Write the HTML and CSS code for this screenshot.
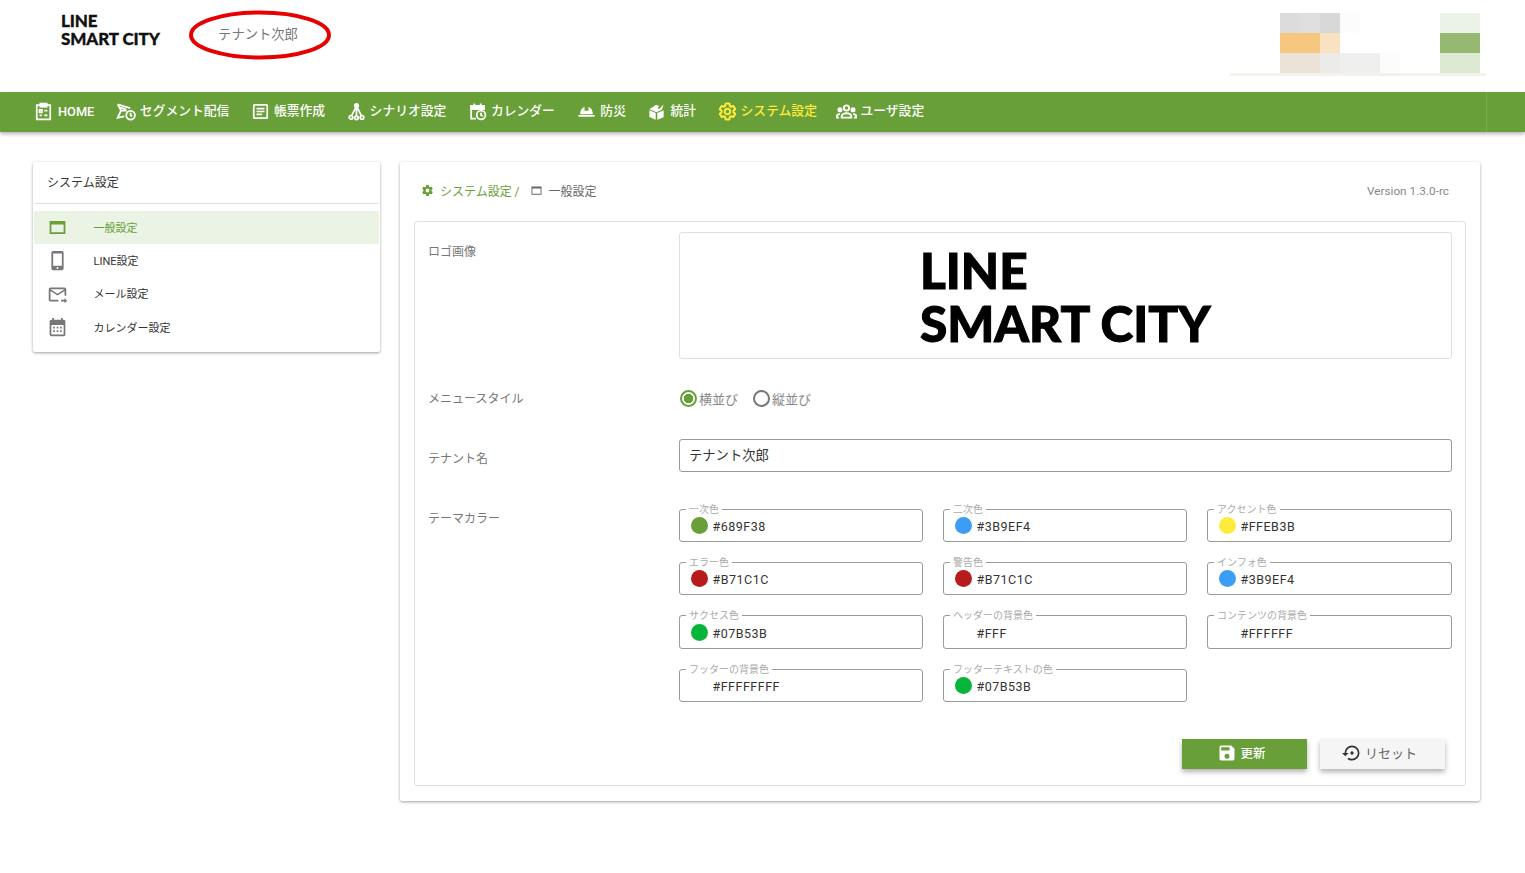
FILE: index.html
```html
<!DOCTYPE html>
<html lang="ja">
<head>
    <meta charset="UTF-8" />
    <meta name="viewport" content="width=device-width, initial-scale=1.0"/>
    <title>システム設定</title>
    <link rel="stylesheet" href="styles.css">
</head>
<body>
    <header class="top">
        <div class="logo"><span>LINE</span><span>SMART CITY</span></div>
        <div class="tenant">
            テナント次郎
            <svg class="ring" viewBox="0 0 142 50"><ellipse cx="71" cy="25" rx="69" ry="22.5" /></svg>
        </div>
        <div class="account">
            <div class="mosaic">
                <i class="c1"></i><i class="c2"></i><i class="c3"></i><i class="c4"></i><i></i><i></i><i></i><i></i><i class="c5"></i><i class="c5"></i>
                <i class="c6"></i><i class="c6"></i><i class="c7"></i><i></i><i></i><i></i><i></i><i></i><i class="c8"></i><i class="c8"></i>
                <i class="c9"></i><i class="c9"></i><i class="c10"></i><i class="c11"></i><i class="c11"></i><i class="c4"></i><i></i><i></i><i class="c12"></i><i class="c12"></i>
            </div>
        </div>
    </header>

    <nav class="menu">
        <a class="menu-item home">
            <svg viewBox="0 0 24 24" class="line"><path d="M8 4H3.500v18h17V4H16"/><rect x="8" y="2" width="8" height="4" fill="#fff"/><path d="M7 10h3v3H7zM7 17h3M13 11h4M13 17h4"/></svg>
            <span>HOME</span>
        </a>
        <a class="menu-item">
            <svg viewBox="0 0 24 24" class="line wide"><path d="M2 4l15 4.500M2 4l4 7.500h7M6 11.500L2 20l8-1.500M4 7.500l8 2.500"/><circle cx="17.500" cy="17" r="5.200"/><path d="M17.500 14v3.200l2 1"/></svg>
            <span>セグメント配信</span>
        </a>
        <a class="menu-item">
            <svg viewBox="0 0 24 24" class="line"><rect x="3.500" y="3.500" width="17" height="17" rx="1"/><path d="M7 8.500h10M7 12h10M7 15.500h7"/></svg>
            <span>帳票作成</span>
        </a>
        <a class="menu-item">
            <svg viewBox="0 0 24 24" class="line"><circle cx="12" cy="4.500" r="2.200" fill="#fff"/><circle cx="5" cy="19.500" r="2.200"/><circle cx="12" cy="20" r="2.200"/><circle cx="19" cy="19.500" r="2.200"/><path d="M11 7l-5 10M13 7l5 10M12 7v11"/></svg>
            <span>シナリオ設定</span>
        </a>
        <a class="menu-item calendar">
            <svg viewBox="0 0 24 24" class="line"><path d="M10 21H4V5h16v5"/><path d="M4 5h16v4H4z" fill="#fff"/><path d="M8 2v4M16 2v4"/><circle cx="16.500" cy="16.500" r="5.500"/><path d="M16.500 13.500v3.200l2 1"/></svg>
            <span>カレンダー</span>
        </a>
        <a class="menu-item">
            <svg viewBox="0 0 24 24" class="fill"><path d="M4 15.500c0-4.500 2-8 5.500-9.500V11h5V6c3.500 1.500 5.500 5 5.500 9.500zM1.500 16.500h21v.5c0 1-.8 1.500-1.500 1.500H3c-.7 0-1.500-.5-1.500-1.500z"/></svg>
            <span>防災</span>
        </a>
        <a class="menu-item">
            <svg viewBox="0 0 24 24" class="fill"><path d="M11.500 3.500l4 1.500-2 2.500 1.500 1.500 6-6-2 6.500L12 13 3 9zM3 10.500l8 3.500v8.500l-8-3.700zM21 10.500v8.800l-8 3.200V14z"/></svg>
            <span>統計</span>
        </a>
        <a class="menu-item active">
            <svg viewBox="0 0 24 24" class="cog-line"><path d="M12,15.5A3.5,3.5 0 0,1 8.5,12A3.5,3.5 0 0,1 12,8.5A3.5,3.5 0 0,1 15.5,12A3.5,3.5 0 0,1 12,15.5M19.43,12.97C19.47,12.65 19.5,12.33 19.5,12C19.5,11.67 19.47,11.34 19.43,11L21.54,9.37C21.73,9.22 21.78,8.95 21.66,8.73L19.66,5.27C19.54,5.05 19.27,4.96 19.05,5.05L16.56,6.05C16.04,5.66 15.5,5.32 14.87,5.07L14.5,2.42C14.46,2.18 14.25,2 14,2H10C9.75,2 9.54,2.18 9.5,2.42L9.13,5.07C8.5,5.32 7.96,5.66 7.44,6.05L4.95,5.05C4.73,4.96 4.46,5.05 4.34,5.27L2.34,8.73C2.21,8.95 2.27,9.22 2.46,9.37L4.57,11C4.53,11.34 4.5,11.67 4.5,12C4.5,12.33 4.53,12.65 4.57,12.97L2.46,14.63C2.27,14.78 2.21,15.05 2.34,15.27L4.34,18.73C4.46,18.95 4.73,19.03 4.95,18.94L7.44,17.94C7.96,18.34 8.5,18.68 9.13,18.93L9.5,21.58C9.54,21.82 9.75,22 10,22H14C14.25,22 14.46,21.82 14.5,21.58L14.87,18.93C15.5,18.67 16.04,18.34 16.56,17.94L19.05,18.95C19.27,19.03 19.54,18.95 19.66,18.73L21.66,15.27C21.78,15.05 21.73,14.78 21.54,14.63L19.43,12.97Z"/></svg>
            <span>システム設定</span>
        </a>
        <a class="menu-item users">
            <svg viewBox="0 0 24 24" class="line"><circle cx="12" cy="8" r="3"/><circle cx="4.500" cy="10" r="1.800" fill="#fff"/><circle cx="19.500" cy="10" r="1.800" fill="#fff"/><path d="M6.500 19v-1.500c0-2 2.500-3.500 5.500-3.500s5.500 1.500 5.500 3.500V19z"/><path d="M3.500 19H1v-1.500c0-1.500 1.500-2.500 3.500-2.500M20.500 19H23v-1.500c0-1.500-1.500-2.500-3.500-2.500"/></svg>
            <span>ユーザ設定</span>
        </a>
        <i class="menu-edge"></i>
    </nav>

    <main class="page">
        <aside class="side card">
            <div class="side-title">システム設定</div>
            <ul class="side-list">
                <li class="side-item selected">
                    <svg viewBox="0 0 24 24"><path d="M3 4.500h18v15H3zM5 8.500V17.500h14V8.500z"/></svg>
                    一般設定
                </li>
                <li class="side-item">
                    <svg viewBox="0 0 24 24"><path d="M17,18H7V4H17M17,1H7C5.89,1 5,1.89 5,3V21A2,2 0 0,0 7,23H17A2,2 0 0,0 19,21V3C19,1.89 18.1,1 17,1M12,19.500a1,1 0 1,1 -.01,0Z"/></svg>
                    LINE設定
                </li>
                <li class="side-item">
                    <svg viewBox="0 0 24 24"><path d="M13 19C13 18.660 13.040 18.330 13.090 18H4V8L12 13L20 8V13.090C20.720 13.210 21.390 13.460 22 13.810V6C22 4.900 21.100 4 20 4H4C2.900 4 2 4.900 2 6V18C2 19.100 2.900 20 4 20H13.090C13.040 19.670 13 19.340 13 19M20 6L12 11L4 6H20M20 22V20H16V18H20V16L23 19L20 22Z"/></svg>
                    メール設定
                </li>
                <li class="side-item">
                    <svg viewBox="0 0 24 24"><path d="M19,20H5V9H19M16,1V3H8V1H6V3H5C3.890,3 3,3.890 3,5V20A2,2 0 0,0 5,22H19A2,2 0 0,0 21,20V5C21,3.890 20.100,3 19,3H18V1M7,11H9V13H7M11,11H13V13H11M15,11H17V13H15M7,15H9V17H7M11,15H13V17H11M15,15H17V17H15Z"/></svg>
                    カレンダー設定
                </li>
            </ul>
        </aside>

        <section class="content card">
            <div class="crumbs">
                <svg class="crumb-cog" viewBox="0 0 24 24"><path d="M12,15.5A3.5,3.5 0 0,1 8.5,12A3.5,3.5 0 0,1 12,8.5A3.5,3.5 0 0,1 15.5,12A3.5,3.5 0 0,1 12,15.5M19.43,12.97C19.47,12.65 19.5,12.33 19.5,12C19.5,11.67 19.47,11.34 19.43,11L21.54,9.37C21.73,9.22 21.78,8.95 21.66,8.73L19.66,5.27C19.54,5.05 19.27,4.96 19.05,5.05L16.56,6.05C16.04,5.66 15.5,5.32 14.87,5.07L14.5,2.42C14.46,2.18 14.25,2 14,2H10C9.75,2 9.54,2.18 9.5,2.42L9.13,5.07C8.5,5.32 7.96,5.66 7.44,6.05L4.95,5.05C4.73,4.96 4.46,5.05 4.34,5.27L2.34,8.73C2.21,8.95 2.27,9.22 2.46,9.37L4.57,11C4.53,11.34 4.5,11.67 4.5,12C4.5,12.33 4.53,12.65 4.57,12.97L2.46,14.63C2.27,14.78 2.21,15.05 2.34,15.27L4.34,18.73C4.46,18.95 4.73,19.03 4.95,18.94L7.44,17.94C7.96,18.34 8.5,18.68 9.13,18.93L9.5,21.58C9.54,21.82 9.75,22 10,22H14C14.25,22 14.46,21.82 14.5,21.58L14.87,18.93C15.5,18.67 16.04,18.34 16.56,17.94L19.05,18.95C19.27,19.03 19.54,18.95 19.66,18.73L21.66,15.27C21.78,15.05 21.73,14.78 21.54,14.63L19.43,12.97Z"/></svg>
                <span class="crumb-link">システム設定 /</span>
                <svg class="crumb-win" viewBox="0 0 24 24"><path d="M1 3h22v18H1zM3 7.500V19h18V7.500z"/></svg>
                <span class="crumb-now">一般設定</span>
                <span class="version">Version 1.3.0-rc</span>
            </div>

            <div class="panel">
                <div class="row row-logo">
                    <div class="row-label">ロゴ画像</div>
                    <div class="logo-box"><div class="logo logo-big"><span>LINE</span><span>SMART CITY</span></div></div>
                </div>
                <div class="row row-radio">
                    <div class="row-label">メニュースタイル</div>
                    <div class="radios">
                        <span class="radio on"></span><span class="radio-text">横並び</span>
                        <span class="radio"></span><span class="radio-text">縦並び</span>
                    </div>
                </div>
                <div class="row row-name">
                    <div class="row-label">テナント名</div>
                    <div class="name-input">テナント次郎</div>
                </div>
                <div class="row row-theme">
                    <div class="row-label">テーマカラー</div>
                    <div class="colors">
                        <div class="field"><label>一次色</label><i class="dot" style="background:#689f38"></i>#689F38</div>
                        <div class="field"><label>二次色</label><i class="dot" style="background:#3b9ef4"></i>#3B9EF4</div>
                        <div class="field"><label>アクセント色</label><i class="dot" style="background:#ffeb3b"></i>#FFEB3B</div>
                        <div class="field"><label>エラー色</label><i class="dot" style="background:#b71c1c"></i>#B71C1C</div>
                        <div class="field"><label>警告色</label><i class="dot" style="background:#b71c1c"></i>#B71C1C</div>
                        <div class="field"><label>インフォ色</label><i class="dot" style="background:#3b9ef4"></i>#3B9EF4</div>
                        <div class="field"><label>サクセス色</label><i class="dot" style="background:#07b53b"></i>#07B53B</div>
                        <div class="field"><label>ヘッダーの背景色</label><i class="dot" style="background:#fff"></i>#FFF</div>
                        <div class="field"><label>コンテンツの背景色</label><i class="dot" style="background:#fff"></i>#FFFFFF</div>
                        <div class="field"><label>フッターの背景色</label><i class="dot" style="background:#fff"></i>#FFFFFFFF</div>
                        <div class="field"><label>フッターテキストの色</label><i class="dot" style="background:#07b53b"></i>#07B53B</div>
                    </div>
                </div>
                <div class="actions">
                    <button class="btn btn-save">
                        <svg viewBox="0 0 24 24"><path d="M15,9H5V5H15M12,19A3,3 0 0,1 9,16A3,3 0 0,1 12,13A3,3 0 0,1 15,16A3,3 0 0,1 12,19M17,3H5C3.890,3 3,3.900 3,5V19A2,2 0 0,0 5,21H19A2,2 0 0,0 21,19V7L17,3Z"/></svg>
                        更新
                    </button>
                    <button class="btn btn-reset">
                        <svg viewBox="0 0 24 24"><path d="M12 3A9 9 0 0 0 3 12H0L4 16L8 12H5A7 7 0 0 1 12 5A7 7 0 0 1 19 12A7 7 0 0 1 12 19C10.500 19 9.090 18.500 7.940 17.700L6.500 19.140C8.040 20.300 9.940 21 12 21A9 9 0 0 0 21 12A9 9 0 0 0 12 3M14 12A2 2 0 0 0 12 10A2 2 0 0 0 10 12A2 2 0 0 0 12 14A2 2 0 0 0 14 12Z"/></svg>
                        リセット
                    </button>
                </div>
            </div>
        </section>
    </main>
</body>
</html>
```

FILE: styles.css
```css
* {
    box-sizing: border-box;
}

body {
    margin: 0;
    min-height: 100vh;
    font-family: Roboto, "Noto Sans CJK JP", sans-serif;
    background-color: #fff;
    color: #333;
}

/* header */
.top {
    height: 92px;
    display: flex;
    padding: 13px 39px 0 61px;
}

.logo {
    font-family: Lato, sans-serif;
    font-weight: 900;
    font-size: 17px;
    letter-spacing: -0.1px;
    -webkit-text-stroke: 0.3px #111;
    color: #111;
    width: 128px;
}

.logo span {
    display: block;
    height: 18px;
    line-height: 15px;
    white-space: nowrap;
}

.tenant {
    position: relative;
    width: 142px;
    height: 50px;
    margin-top: -3px;
    padding-right: 4px;
    text-align: center;
    font-size: 13.300px;
    line-height: 50px;
    color: #777;
}

.ring {
    position: absolute;
    left: 0;
    top: 0;
    width: 142px;
    height: 50px;
    fill: none;
    stroke: #e60000;
    stroke-width: 4px;
}

.account {
    margin-left: auto;
    width: 256px;
    height: 63px;
    padding-left: 50px;
    border-bottom: 3px solid #f3f3ec;
}

.mosaic {
    display: grid;
    grid-template-columns: repeat(10, 20px);
    grid-auto-rows: 20px;
}

.c1 { background: #dcdcdc; }
.c2 { background: #dedede; }
.c3 { background: #d8d8d8; }
.c4 { background: #fcfcfc; }
.c5 { background: #ebf2e6; }
.c6 { background: #f7c67f; }
.c7 { background: #f9e2c2; }
.c8 { background: #95b971; }
.c9 { background: #ebe3da; }
.c10 { background: #ecebe7; }
.c11 { background: #efefef; }
.c12 { background: #dee9d3; }

/* menu bar */
.menu {
    height: 40px;
    background-color: #689f38;
    display: flex;
    align-items: center;
    gap: 21.500px;
    padding-left: 34px;
    box-shadow: 0 2px 4px rgba(0, 0, 0, 0.3);
}

.menu-item {
    display: flex;
    align-items: center;
    gap: 4px;
    color: #fff;
    font-size: 12.800px;
    font-weight: 500;
}

.menu-item span {
    padding-bottom: 6px;
}

.menu-item svg {
    width: 19px;
    height: 19px;
    margin-bottom: 2px;
}

.menu-item svg.wide {
    width: 20px;
    height: 20px;
}

.menu-item.home {
    gap: 5px;
}

.menu-item.home span {
    padding-bottom: 2px;
}

.menu-item.calendar {
    margin-right: 1px;
}

.menu-item.users {
    gap: 3px;
    margin-left: -2px;
}

.menu-item.users svg {
    width: 21px;
    height: 21px;
}

.menu-edge {
    width: 1px;
    height: 40px;
    margin-left: auto;
    margin-right: 38px;
    background: #7bab50;
}

.line {
    fill: none;
    stroke: #fff;
    stroke-width: 2.200;
}

.fill {
    fill: #fff;
}

.menu-item.active {
    color: #ffeb3b;
}

.cog-line {
    fill: none;
    stroke: #ffeb3b;
    stroke-width: 2.600;
}

/* page */
.page {
    display: flex;
    align-items: flex-start;
    gap: 20px;
    padding: 30px 45px 0 33px;
}

.card {
    background: #fff;
    border-radius: 2px;
    box-shadow: 0 1px 3px rgba(0, 0, 0, 0.38);
}

.side {
    width: 347px;
    height: 190px;
    padding: 0 1px;
}

.side-title {
    height: 42px;
    padding: 0 13px;
    border-bottom: 1px solid #e0e0e0;
    font-size: 12px;
    line-height: 43px;
    color: #333;
}

.side-list {
    list-style: none;
    margin: 7px 0 0;
    padding: 0;
}

.side-item {
    height: 33.300px;
    display: flex;
    align-items: center;
    padding: 0 0 2px 12.500px;
    gap: 26px;
    font-size: 11px;
    color: #333;
}

.side-item svg {
    width: 21px;
    height: 21px;
    fill: #777;
    margin-top: 2px;
}

.side-item.selected {
    background: #ebf3e5;
    color: #689f38;
}

.side-item.selected svg {
    fill: #689f38;
}

.content {
    width: 1080px;
    height: 639px;
    padding: 0 14px;
}

.crumbs {
    height: 59px;
    display: flex;
    align-items: center;
    padding: 0 17px 2px 7px;
    font-size: 12px;
}

.crumb-cog {
    width: 13px;
    height: 13px;
    fill: #689f38;
    margin-right: 6px;
}

.crumb-link {
    color: #689f38;
}

.crumb-win {
    width: 11px;
    height: 11px;
    fill: #666;
    margin: 0 7px 0 11px;
}

.crumb-now {
    color: #666;
}

.version {
    margin-left: auto;
    color: #888;
    font-size: 11.800px;
}

.panel {
    height: 565px;
    border: 1px solid #e0e0e0;
    border-radius: 3px;
    padding: 10px 13px;
}

.row {
    display: grid;
    grid-template-columns: 251px 773px;
}

.row-label {
    font-size: 12px;
    color: #777;
}

.row-logo {
    height: 127px;
}

.row-logo .row-label {
    padding-top: 10px;
}

.logo-box {
    border: 1px solid #e0e0e0;
    border-radius: 3px;
    padding: 11px 0 0 240px;
}

.logo-big {
    font-size: 49.500px;
    letter-spacing: 0;
    width: auto;
    color: #000;
    -webkit-text-stroke: 1px #000;
}

.logo-big span {
    height: 52.500px;
    line-height: 52px;
}

.row-radio {
    margin-top: 29px;
    height: 20px;
    align-items: center;
}

.row-radio .row-label {
    padding-bottom: 2px;
}

.radios {
    display: flex;
    align-items: center;
    font-size: 13px;
    color: #888;
    padding-left: 1px;
}

.radio {
    width: 17px;
    height: 17px;
    border: 2px solid #777;
    border-radius: 50%;
}

.radio.on {
    border-color: #689f38;
    background: radial-gradient(circle, #689f38 0 4.500px, #fff 5px);
}

.radio-text {
    margin: 1px 15px 0 2px;
}

.row-name {
    margin-top: 31px;
    height: 33px;
}

.row-name .row-label {
    padding-top: 10px;
}

.name-input {
    height: 33px;
    border: 1px solid #999;
    border-radius: 3px;
    padding-left: 9px;
    font-size: 13.300px;
    line-height: 31px;
    color: #333;
}

.row-theme {
    margin-top: 37px;
}

.row-theme .row-label {
    padding-top: 0;
}

.colors {
    display: grid;
    grid-template-columns: 244px 244px 245px;
    column-gap: 20px;
    grid-template-rows: 33px 33px 34px 33px;
    row-gap: 20px;
}

.field {
    position: relative;
    display: flex;
    align-items: center;
    padding: 2px 0 0 11px;
    border: 1px solid #999;
    border-radius: 3px;
    font-size: 12.500px;
    letter-spacing: 0.5px;
    color: #333;
}

.field label {
    position: absolute;
    left: 6px;
    top: -6px;
    padding: 0 3px;
    background: #fff;
    font-size: 10px;
    line-height: 12px;
    letter-spacing: 0;
    color: #aaa;
}

.dot {
    width: 17px;
    height: 17px;
    border-radius: 50%;
    margin: 0 4.500px 2px 0;
}

.actions {
    display: flex;
    justify-content: flex-end;
    gap: 13px;
    margin-top: 37px;
    padding-right: 7px;
}

.btn {
    width: 125px;
    height: 30px;
    border: none;
    display: flex;
    align-items: center;
    justify-content: center;
    gap: 3px;
    padding: 0 6px 3px 0;
    font-family: inherit;
    font-size: 12.500px;
    box-shadow: 0 3px 5px rgba(0, 0, 0, 0.3);
}

.btn svg {
    width: 20px;
    height: 20px;
}

.btn-save {
    background: #689f38;
    color: #fff;
    font-weight: 500;
}

.btn-save svg {
    fill: #fff;
}

.btn-reset {
    background: #f5f5f5;
    color: #666;
    font-size: 13px;
}

.btn-reset svg {
    fill: #333;
}
```
